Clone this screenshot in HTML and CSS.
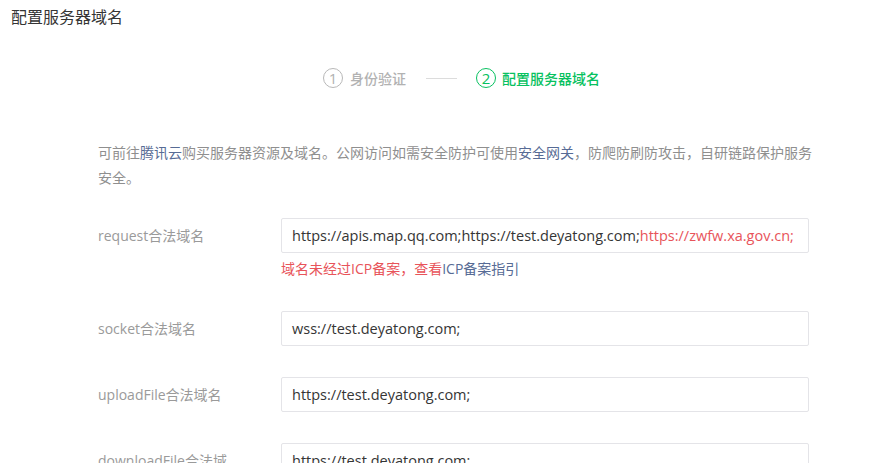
FILE: index.html
```html
<!DOCTYPE html>
<html lang="zh-CN">
<head>
<meta charset="utf-8">
<title>配置服务器域名</title>
<link rel="stylesheet" href="styles.css">
</head>
<body>
<div class="dialog">
  <div class="dialog-head">配置服务器域名</div>
  <div class="steps">
    <div class="step">
      <span class="step-num">1</span>
      <span class="step-text">身份验证</span>
    </div>
    <span class="step-line"></span>
    <div class="step step-active">
      <span class="step-num">2</span>
      <span class="step-text">配置服务器域名</span>
    </div>
  </div>
  <div class="content">
    <p class="desc">可前往<a class="link">腾讯云</a>购买服务器资源及域名。公网访问如需安全防护可使用<a class="link">安全网关</a>，防爬防刷防攻击，自研链路保护服务安全。</p>
    <div class="form">
      <div class="row">
        <label class="label">request合法域名</label>
        <div class="field">
          <div class="input">https://apis.map.qq.com;https://test.deyatong.com;<span class="bad">https://zwfw.xa.gov.cn;</span></div>
          <div class="error">域名未经过ICP备案，查看<a class="link">ICP备案指引</a></div>
        </div>
      </div>
      <div class="row">
        <label class="label">socket合法域名</label>
        <div class="field">
          <div class="input">wss://test.deyatong.com;</div>
        </div>
      </div>
      <div class="row">
        <label class="label">uploadFile合法域名</label>
        <div class="field">
          <div class="input">https://test.deyatong.com;</div>
        </div>
      </div>
      <div class="row">
        <label class="label">downloadFile合法域名</label>
        <div class="field">
          <div class="input">https://test.deyatong.com;</div>
        </div>
      </div>
    </div>
  </div>
</div>
</body>
</html>
```
FILE: styles.css
```css
html, body {
  margin: 0;
  padding: 0;
  background: #ffffff;
  overflow: hidden;
}
body {
  font-family: "Open Sans", "Noto Sans CJK SC", sans-serif;
  font-size: 14px;
  color: #353535;
}
.dialog {
  width: 893px;
  height: 463px;
  overflow: hidden;
}
.dialog-head {
  height: 34px;
  line-height: 34px;
  padding-left: 11px;
  font-size: 16px;
  color: #353535;
}
.steps {
  display: flex;
  align-items: center;
  height: 20px;
  margin-top: 34px;
  padding-left: 323px;
}
.step {
  display: flex;
  align-items: center;
  color: #b2b2b2;
}
.step-num {
  box-sizing: border-box;
  width: 20px;
  height: 20px;
  border: 1px solid #b8b8b8;
  border-radius: 50%;
  display: flex;
  align-items: center;
  justify-content: center;
  font-size: 15px;
  line-height: 1;
  margin-right: 7px;
}
.step-text {
  font-size: 14px;
  font-weight: 500;
}
.step-line {
  width: 31px;
  height: 1px;
  background: #dcdcdc;
  margin: 0 19px 0 20px;
}
.step-active {
  color: #07c160;
}
.step-active .step-num {
  border-color: #07c160;
  margin-right: 6px;
}
.content {
  padding-left: 98px;
  margin-top: 52px;
}
.desc {
  width: 720px;
  margin: 0;
  line-height: 25px;
  color: #8f8f8f;
}
.link {
  color: #576b95;
  text-decoration: none;
}
.form {
  margin-top: 28px;
}
.row {
  display: flex;
  align-items: flex-start;
  margin-bottom: 31px;
}
.label {
  box-sizing: border-box;
  width: 183px;
  flex: none;
  padding-right: 44px;
  line-height: 35px;
  color: #9a9a9a;
  word-break: break-all;
}
.field {
  width: 528px;
}
.input {
  box-sizing: border-box;
  height: 35px;
  line-height: 33px;
  border: 1px solid #e4e4e8;
  border-radius: 2px;
  padding: 0 10px;
  font-size: 14.5px;
  color: #353535;
  white-space: nowrap;
  overflow: hidden;
}
.bad {
  color: #e8545a;
}
.error {
  margin-top: 5px;
  line-height: 22px;
  color: #e8545a;
}
```
